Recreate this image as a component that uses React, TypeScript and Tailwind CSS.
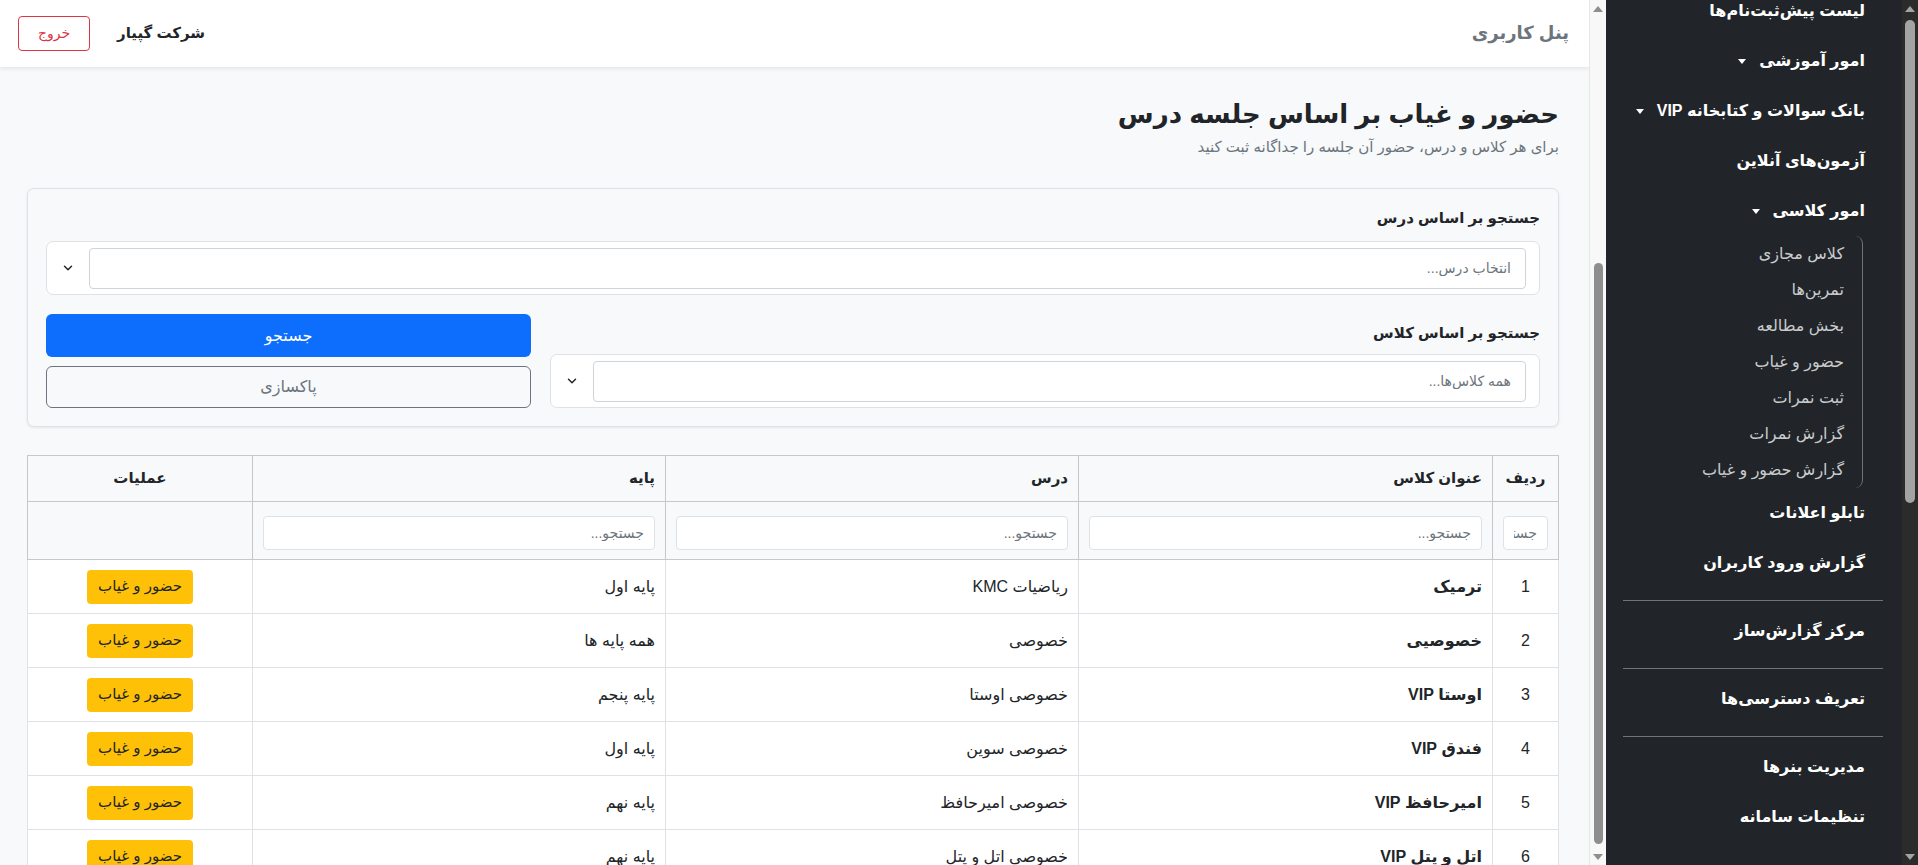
import { ChevronDown } from "lucide-react";

const FONT = '"Liberation Sans", "DejaVu Sans", sans-serif';

const rows = [
  { id: 1, title: "ترمیک", lesson: "ریاضیات KMC", grade: "پایه اول" },
  { id: 2, title: "خصوصیی", lesson: "خصوصی", grade: "همه پایه ها" },
  { id: 3, title: "اوستا VIP", lesson: "خصوصی اوستا", grade: "پایه پنجم" },
  { id: 4, title: "فندق VIP", lesson: "خصوصی سوین", grade: "پایه اول" },
  { id: 5, title: "امیرحافظ VIP", lesson: "خصوصی امیرحافظ", grade: "پایه نهم" },
  { id: 6, title: "اتل و یتل VIP", lesson: "خصوصی اتل و یتل", grade: "پایه نهم" },
];

function Caret() {
  return <span className="inline-block w-0 h-0 border-t-[5px] border-x-[4.5px] border-x-transparent border-t-white" />;
}

function NavItem({ label, caret }: { label: string; caret?: boolean }) {
  return (
    <a href="#" className="h-[50px] shrink-0 flex items-center gap-[13px] pr-[37px] text-[16px] font-semibold text-white">
      {label}
      {caret && <Caret />}
    </a>
  );
}

function Divider() {
  return <div className="ml-[17px] mr-[19px] h-px shrink-0 bg-[#6c757d] mt-[12px] mb-[5px]" />;
}

// classic scrollbar look (the page is captured with scrollbars hidden)
function MainScrollbar() {
  return (
    <div className="w-[17px] shrink-0 h-full bg-[#f8f8f8] border-l border-[#e6e6e6] flex flex-col items-center">
      <div className="h-[17px] shrink-0 flex items-center justify-center">
        <span className="w-0 h-0 border-b-[6px] border-x-[5px] border-x-transparent border-b-[#8e8e8e]" />
      </div>
      <div className="h-[246px] shrink-0" />
      <div className="w-[9px] h-[581px] shrink-0 rounded-full bg-[#8e8e8e]" />
      <div className="flex-1" />
      <div className="h-[17px] shrink-0 flex items-center justify-center">
        <span className="w-0 h-0 border-t-[6px] border-x-[5px] border-x-transparent border-t-[#8e8e8e]" />
      </div>
    </div>
  );
}

function SideScrollbar() {
  return (
    <div className="w-[16px] shrink-0 h-full bg-[#2b2b2b] flex flex-col items-center">
      <div className="h-[17px] shrink-0 flex items-center justify-center">
        <span className="w-0 h-0 border-b-[6px] border-x-[5px] border-x-transparent border-b-[#a3a3a3]" />
      </div>
      <div className="h-[3px] shrink-0" />
      <div className="w-[10px] h-[483px] shrink-0 rounded-full bg-[#a3a3a3]" />
      <div className="flex-1" />
      <div className="h-[17px] shrink-0 flex items-center justify-center">
        <span className="w-0 h-0 border-t-[6px] border-x-[5px] border-x-transparent border-t-[#a3a3a3]" />
      </div>
    </div>
  );
}

function Sidebar() {
  const sub = ["کلاس مجازی", "تمرین‌ها", "بخش مطالعه", "حضور و غیاب", "ثبت نمرات", "گزارش نمرات", "گزارش حضور و غیاب"];
  return (
    <aside className="w-[296px] shrink-0 h-full overflow-hidden bg-[#212529]">
      <nav dir="rtl" className="-mt-[14px] flex flex-col">
        <NavItem label="لیست پیش‌ثبت‌نام‌ها" />
        <NavItem label="امور آموزشی" caret />
        <NavItem label="بانک سوالات و کتابخانه VIP" caret />
        <NavItem label="آزمون‌های آنلاین" />
        <NavItem label="امور کلاسی" caret />
        <div className="mr-[39px] border-r border-[#6c757d] rounded-r-[8px] flex flex-col">
          {sub.map((s) => (
            <a key={s} href="#" className="h-[36px] flex items-center pr-[18px] text-[16px] text-[#c9cbcd]">
              {s}
            </a>
          ))}
        </div>
        <NavItem label="تابلو اعلانات" />
        <NavItem label="گزارش ورود کاربران" />
        <Divider />
        <NavItem label="مرکز گزارش‌ساز" />
        <Divider />
        <NavItem label="تعریف دسترسی‌ها" />
        <Divider />
        <NavItem label="مدیریت بنرها" />
        <NavItem label="تنظیمات سامانه" />
      </nav>
    </aside>
  );
}

function SelectBox({ placeholder }: { placeholder: string }) {
  return (
    <div className="h-[54px] bg-white border border-[#dee2e6] rounded-[7px] flex items-center pr-[13px]">
      <input
        className="flex-1 h-[41px] border border-[#ced4da] rounded-[4px] px-[14px] text-[14px] text-[#212529] placeholder:text-[#6c757d] outline-none"
        placeholder={placeholder}
      />
      <div className="w-[42px] flex items-center justify-center text-[#212529]">
        <ChevronDown className="w-[14px] h-[14px]" strokeWidth={2.5} />
      </div>
    </div>
  );
}

export default function App() {
  return (
    <div className="flex h-screen w-full overflow-hidden text-[#212529]" style={{ fontFamily: FONT }}>
      <div className="flex-1 min-w-0 h-full overflow-hidden bg-[#f8f9fa]">
        <div dir="rtl">
          <header className="h-[67px] bg-white shadow-[0_2px_4px_rgba(0,0,0,0.08)] flex items-center justify-between pr-[20px] pl-[18px]">
            <h1 className="text-[18px] font-bold text-[#6c757d]">پنل کاربری</h1>
            <div className="flex items-center gap-[27px]">
              <span className="text-[15px] font-bold text-[#212529]">شرکت گپیار</span>
              <button className="h-[35px] w-[72px] rounded-[4px] border border-[#dc3545] text-[#dc3545] text-[14px]">خروج</button>
            </div>
          </header>

          <div className="pr-[30px] pl-[27px] pt-[32px]">
            <h2 className="text-[26px] leading-[1.2] font-bold">حضور و غیاب بر اساس جلسه درس</h2>
            <p className="mt-[6px] text-[15px] text-[#6c757d]">برای هر کلاس و درس، حضور آن جلسه را جداگانه ثبت کنید</p>

            <div className="mt-[29px] border border-[#dee2e6] rounded-[7px] bg-[#f8f9fa] shadow-[0_1px_3px_rgba(0,0,0,0.08)] p-[18px]">
              <label className="block text-[15px] font-bold mb-[12px]">جستجو بر اساس درس</label>
              <SelectBox placeholder="انتخاب درس..." />

              <div className="mt-[19px] grid grid-cols-[1fr_485px] gap-[19px] items-end">
                <div>
                  <label className="block text-[15px] font-bold mb-[10px]">جستجو بر اساس کلاس</label>
                  <SelectBox placeholder="همه کلاس‌ها..." />
                </div>
                <div className="flex flex-col gap-[9px]">
                  <button className="h-[43px] rounded-[6px] bg-[#0d6efd] text-white text-[16px]">جستجو</button>
                  <button className="h-[42px] rounded-[6px] border border-[#6c757d] text-[#6c757d] text-[16px]">پاکسازی</button>
                </div>
              </div>
            </div>

            <table className="mt-[28px] w-full table-fixed border-collapse bg-white text-[16px]">
              <colgroup>
                <col className="w-[66px]" />
                <col className="w-[414px]" />
                <col className="w-[413px]" />
                <col className="w-[413px]" />
                <col />
              </colgroup>
              <thead className="bg-[#f8f9fa] text-[15px]">
                <tr>
                  <th className="h-[46px] px-[10px] border border-[#c6c7c8] text-center font-bold">ردیف</th>
                  <th className="h-[46px] px-[10px] border border-[#c6c7c8] text-right font-bold">عنوان کلاس</th>
                  <th className="h-[46px] px-[10px] border border-[#c6c7c8] text-right font-bold">درس</th>
                  <th className="h-[46px] px-[10px] border border-[#c6c7c8] text-right font-bold">پایه</th>
                  <th className="h-[46px] px-[10px] border border-[#c6c7c8] text-center font-bold">عملیات</th>
                </tr>
                <tr>
                  {[0, 1, 2, 3].map((i) => (
                    <td key={i} className="pt-[14px] pb-[9px] px-[10px] border border-[#c6c7c8]">
                      <input
                        className="w-full h-[34px] rounded-[4px] border border-[#dee2e6] bg-white px-[10px] text-[14px] placeholder:text-[#6c757d] outline-none"
                        placeholder="جستجو..."
                      />
                    </td>
                  ))}
                  <td className="border border-[#c6c7c8]" />
                </tr>
              </thead>
              <tbody>
                {rows.map((r) => (
                  <tr key={r.id}>
                    <td className="h-[54px] px-[10px] border border-[#dee2e6] text-center">{r.id}</td>
                    <td className="h-[54px] px-[10px] border border-[#dee2e6] font-bold">{r.title}</td>
                    <td className="h-[54px] px-[10px] border border-[#dee2e6]">{r.lesson}</td>
                    <td className="h-[54px] px-[10px] border border-[#dee2e6]">{r.grade}</td>
                    <td className="h-[54px] px-[10px] border border-[#dee2e6] text-center">
                      <button className="h-[34px] px-[11px] rounded-[4px] bg-[#ffc107] text-[15px] text-[#212529]">حضور و غیاب</button>
                    </td>
                  </tr>
                ))}
              </tbody>
            </table>
          </div>
        </div>
      </div>
      <MainScrollbar />
      <Sidebar />
      <SideScrollbar />
    </div>
  );
}
